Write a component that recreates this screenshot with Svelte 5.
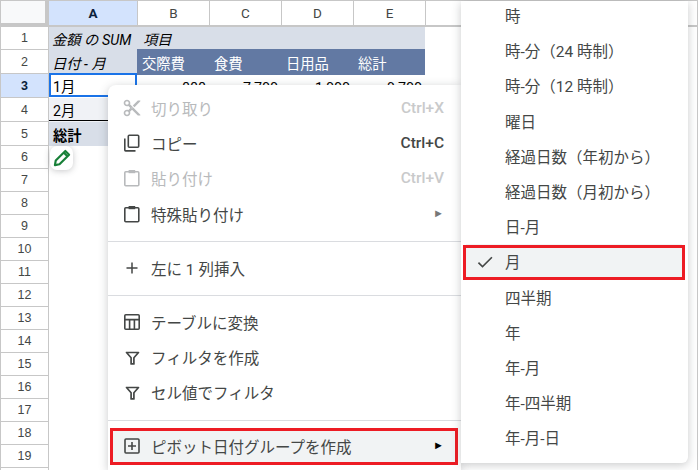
<script>
  const cols = ['A', 'B', 'C', 'D', 'E', ''];
  const rows = Array.from({ length: 20 }, (_, i) => i + 1);
  const dates = ['時', '時-分（24 時制）', '時-分（12 時制）', '曜日', '経過日数（年初から）', '経過日数（月初から）', '日-月', '月', '四半期', '年', '年-月', '年-四半期', '年-月-日'];
</script>

<div class="shot">
  <div class="sheet">
    <div class="corner"></div>
    {#each cols as c, i}
      <div class="colhead" class:active={i === 0}>{c}</div>
    {/each}

    {#each rows as r}
      <div class="rowhead" class:active={r === 3}>{r === 20 ? '' : r}</div>
      {#if r === 1}
        <div class="cell pale it">金額 の SUM</div>
        <div class="cell pale it item-head">項目</div>
        <div class="cell pale"></div><div class="cell pale"></div><div class="cell pale"></div><div class="cell"></div>
      {:else if r === 2}
        <div class="cell pale it">日付 - 月</div>
        <div class="cell dark">交際費</div>
        <div class="cell dark">食費</div>
        <div class="cell dark">日用品</div>
        <div class="cell dark">総計</div>
        <div class="cell"></div>
      {:else if r === 3}
        <div class="cell selected">1月</div>
        <div class="cell num">888</div>
        <div class="cell num">7,700</div>
        <div class="cell num">1,000</div>
        <div class="cell num">9,700</div>
        <div class="cell"></div>
      {:else if r === 4}
        <div class="cell light">2月</div>
        <div class="cell"></div><div class="cell"></div><div class="cell"></div><div class="cell"></div><div class="cell"></div>
      {:else if r === 5}
        <div class="cell pale total">総計</div>
        <div class="cell"></div><div class="cell"></div><div class="cell"></div><div class="cell"></div><div class="cell"></div>
      {:else}
        <div class="cell"></div><div class="cell"></div><div class="cell"></div><div class="cell"></div><div class="cell"></div><div class="cell"></div>
      {/if}
    {/each}
  </div>

  <div class="pencil">
    <svg width="20" height="20" viewBox="0 0 24 24" fill="none" stroke="#188038" stroke-width="2.6" stroke-linejoin="round"><path d="M3.5 20.5l1-5.5L16 3.5l4.5 4.5L9 19.5z" /><path d="M14 5.5l4.5 4.5" /></svg>
  </div>

  <div class="menu left">
    <div class="item off">
      <svg class="ic" width="20" height="20" viewBox="0 0 24 24" fill="currentColor"><path d="M9.64 7.64c.23-.5.36-1.05.36-1.64 0-2.21-1.79-4-4-4S2 3.79 2 6s1.79 4 4 4c.59 0 1.14-.13 1.64-.36L10 12l-2.36 2.36C7.14 14.13 6.59 14 6 14c-2.21 0-4 1.79-4 4s1.79 4 4 4 4-1.79 4-4c0-.59-.13-1.14-.36-1.64L12 14l7 7h3v-1L9.64 7.64zM6 8c-1.1 0-2-.89-2-2s.9-2 2-2 2 .89 2 2-.9 2-2 2zm0 12c-1.1 0-2-.89-2-2s.9-2 2-2 2 .89 2 2-.9 2-2 2zm6-7.5c-.28 0-.5-.22-.5-.5s.22-.5.5-.5.5.22.5.5-.22.5-.5.5zM19 3l-6 6 2 2 7-7V3z" /></svg>
      <span class="label">切り取り</span><span class="key">Ctrl+X</span>
    </div>
    <div class="item">
      <svg class="ic" width="20" height="20" viewBox="0 0 20 20" fill="none" stroke="currentColor" stroke-width="1.6"><rect x="6.3" y="2.3" width="10.4" height="12" rx="1" /><path d="M2.8 5.5v11.6a.8.8 0 0 0 .8.8h9.9" /></svg>
      <span class="label">コピー</span><span class="key">Ctrl+C</span>
    </div>
    <div class="item off">
      <svg class="ic" width="20" height="20" viewBox="0 0 20 20" fill="none" stroke="currentColor" stroke-width="1.6"><rect x="2.8" y="3.8" width="14" height="14" rx="1" /><rect x="6.6" y="2" width="6.6" height="3.2" fill="currentColor" stroke="none" /></svg>
      <span class="label">貼り付け</span><span class="key">Ctrl+V</span>
    </div>
    <div class="item">
      <svg class="ic" width="20" height="20" viewBox="0 0 20 20" fill="none" stroke="currentColor" stroke-width="1.6"><rect x="2.8" y="3.8" width="14" height="14" rx="1" /><rect x="6.6" y="2" width="6.6" height="3.2" fill="currentColor" stroke="none" /></svg>
      <span class="label">特殊貼り付け</span><span class="tri">►</span>
    </div>
    <div class="sep"></div>
    <div class="item">
      <svg class="ic" width="20" height="20" viewBox="0 0 20 20" fill="none" stroke="currentColor" stroke-width="1.5"><path d="M10 4.5v11M4.5 10h11" /></svg>
      <span class="label">左に 1 列挿入</span>
    </div>
    <div class="sep"></div>
    <div class="item">
      <svg class="ic" width="20" height="20" viewBox="0 0 20 20" fill="none" stroke="currentColor" stroke-width="1.6"><rect x="2.8" y="2.8" width="14.4" height="14.4" rx="1" /><path d="M2.8 7.6h14.4M7.6 7.6v9.6M12.4 7.6v9.6" /></svg>
      <span class="label">テーブルに変換</span>
    </div>
    <div class="item">
      <svg class="ic" width="20" height="20" viewBox="0 0 20 20" fill="none" stroke="currentColor" stroke-width="1.7"><path d="M4.5 5.5h12l-4.6 5.2v6.2H9.1v-6.2z" stroke-linejoin="round" /></svg>
      <span class="label">フィルタを作成</span>
    </div>
    <div class="item">
      <svg class="ic" width="20" height="20" viewBox="0 0 20 20" fill="none" stroke="currentColor" stroke-width="1.7"><path d="M4.5 5.5h12l-4.6 5.2v6.2H9.1v-6.2z" stroke-linejoin="round" /></svg>
      <span class="label">セル値でフィルタ</span>
    </div>
    <div class="sep"></div>
    <div class="item hl">
      <svg class="ic" width="20" height="20" viewBox="0 0 20 20" fill="none" stroke="currentColor" stroke-width="1.6"><rect x="3" y="3" width="14" height="14" rx="1" /><path d="M10 6v8M6 10h8" /></svg>
      <span class="label">ピボット日付グループを作成</span><span class="tri dark-tri">►</span>
    </div>
  </div>

  <div class="menu right">
    {#each dates as d}
      <div class="ditem" class:hl2={d === '月'}>
        {#if d === '月'}
          <svg class="check" width="20" height="20" viewBox="0 0 24 24" fill="currentColor"><path d="M9 16.17 4.83 12l-1.42 1.41L9 19 21 7l-1.41-1.41z" /></svg>
        {/if}
        <span>{d}</span>
      </div>
    {/each}
  </div>
</div>

<style>
  :global(body) { margin: 0; background: #fff; }
  .shot {
    position: relative;
    width: 700px;
    height: 470px;
    overflow: hidden;
    font-family: Roboto, "Noto Sans CJK JP", sans-serif;
    color: #1f1f1f;
  }
  .sheet {
    display: grid;
    width: 698px;
    box-sizing: border-box;
    grid-template-columns: 48px 88px 72px 72px 72px 72px 1fr;
    grid-template-rows: 26px 23px 24px 24px 24px 24px repeat(15, 23px);
    border-top: 1px solid #c7c7c7;
    border-left: 1px solid #c7c7c7;
    border-right: 1px solid #c7c7c7;
  }
  .corner {
    background: #f8f9fa;
    border-right: 4px solid #c7c7c7;
    border-bottom: 4px solid #c7c7c7;
  }
  .colhead {
    display: flex;
    align-items: center;
    justify-content: center;
    border-left: 1px solid #c7c7c7;
    border-bottom: 2px solid #c7c7c7;
    font-size: 13.5px;
    color: #444746;
  }
  .colhead.active { background: #d3e3fd; color: #0b1f3a; font-weight: 700; border-left: none; }
  .rowhead {
    display: flex;
    align-items: center;
    justify-content: center;
    border-right: 1px solid #c7c7c7;
    border-bottom: 1px solid #c7c7c7;
    font-family: "Liberation Sans", sans-serif;
    font-size: 12.5px;
    color: #444746;
  }
  .rowhead.active { background: #d3e3fd; font-weight: 700; color: #0b1f3a; }
  .cell {
    display: flex;
    align-items: center;
    padding: 0 3px;
    font-size: 14.3px;
    color: #000;
    white-space: nowrap;
    min-width: 0;
  }
  .pale { background: #d8dee8; }
  .it { font-style: italic; padding-left: 3px; }
  .item-head { padding-left: 6px; }
  .dark { background: #6279a3; color: #fff; padding-left: 5px; box-shadow: 0 1px 0 #6279a3, 0 -1px 0 #6279a3; }
  .light { background: #f0f2f6; padding-left: 4px; border-bottom: 3px double #000; margin-bottom: -1px; }
  .total { font-weight: 700; padding-left: 4px; }
  .selected { box-shadow: inset 0 0 0 2px #1a73e8; padding-left: 4px; margin-top: -1px; margin-bottom: 1px; }
  .num { justify-content: flex-end; align-items: flex-end; padding-bottom: 2px; }
  .pencil {
    position: absolute;
    left: 50px;
    top: 146px;
    width: 23px;
    height: 24px;
    display: flex;
    align-items: center;
    justify-content: center;
    background: #fff;
    border-radius: 7px;
    box-shadow: 0 1px 6px rgba(60, 64, 67, 0.28);
  }
  .menu {
    position: absolute;
    background: #fff;
    box-shadow: 0 2px 10px rgba(60, 64, 67, 0.28);
    box-sizing: border-box;
  }
  .left {
    left: 108px;
    top: 85px;
    width: 353px;
    height: 385px;
    padding-top: 5.5px;
    border-radius: 8px 0 0 0;
  }
  .right {
    left: 461px;
    top: 1px;
    width: 227px;
    height: 462px;
    border-radius: 0 0 6px 0;
  }
  .item {
    position: relative;
    display: flex;
    align-items: center;
    height: 35.2px;
    margin: 0 6px 0 5px;
    padding: 0 11px 0 9px;
    font-size: 15.5px;
    color: #444746;
  }
  .ic { flex: none; margin-right: 9px; }
  .label { flex: 1; }
  .key { font-size: 15.5px; font-weight: 500; color: #444746; }
  .off { color: #b8babc; }
  .off .key { color: #c9cacb; }
  .tri { font-size: 11px; color: #777; }
  .dark-tri { color: #000; }
  .sep { height: 1px; background: #dadce0; margin: 10px 0 8px; }
  .hl { background: #f1f3f4; margin-top: -1px; }
  .hl::after {
    content: "";
    position: absolute;
    inset: 0 -3px -2px -3px;
    border: 3px solid #ed1c24;
    pointer-events: none;
  }
  .ditem {
    position: relative;
    display: flex;
    align-items: center;
    height: 35.2px;
    padding-left: 44px;
    font-size: 15.5px;
    color: #444746;
  }
  .ditem:first-child { margin-top: -3.6px; }
  .hl2 { background: #f1f3f4; margin: 0 6px 0 5px; padding-left: 39px; }
  .hl2::after {
    content: "";
    position: absolute;
    inset: 1px -3px -1px -3px;
    border: 3px solid #ed1c24;
  }
  .check { position: absolute; left: 9px; top: 8px; }
</style>
